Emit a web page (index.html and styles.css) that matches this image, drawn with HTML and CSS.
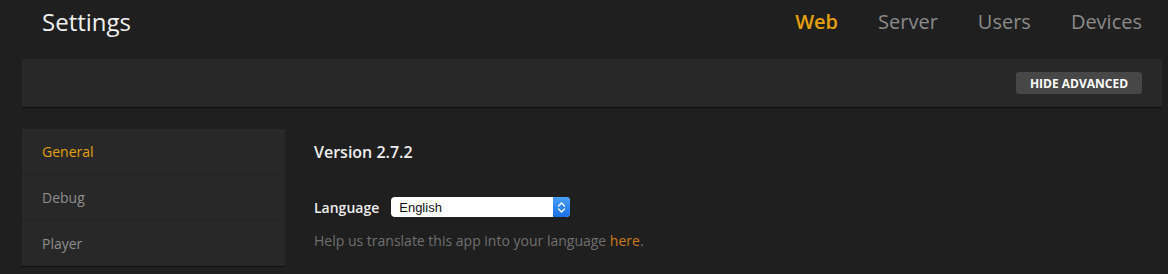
FILE: index.html
```html
<!DOCTYPE html>
<html>
<head>
<meta charset="utf-8">
<link rel="stylesheet" href="styles.css">
</head>
<body>
<div class="page">
  <header class="header">
    <h1 class="title">Settings</h1>
    <nav class="tabs">
      <a class="tab active">Web</a>
      <a class="tab">Server</a>
      <a class="tab">Users</a>
      <a class="tab">Devices</a>
    </nav>
  </header>
  <div class="toolbar">
    <button class="btn">HIDE ADVANCED</button>
  </div>
  <div class="main">
    <ul class="side">
      <li class="side-item active">General</li>
      <li class="side-item">Debug</li>
      <li class="side-item">Player</li>
    </ul>
    <section class="content">
      <h2 class="version">Version 2.7.2</h2>
      <div class="row">
        <label class="label">Language</label>
        <div class="select">
          <span class="select-value">English</span>
          <span class="stepper">
            <svg width="9" height="13" viewBox="0 0 9 13"><path d="M1.5 5 L4.5 2 L7.5 5 M1.5 8 L4.5 11 L7.5 8" fill="none" stroke="#fff" stroke-width="1.3" stroke-linecap="round" stroke-linejoin="round"/></svg>
          </span>
        </div>
      </div>
      <p class="help">Help us translate this app into your language <a class="link">here</a>.</p>
    </section>
  </div>
</div>
</body>
</html>
```

FILE: styles.css
```css
html, body {
  margin: 0;
  padding: 0;
  background: #1f1f1f;
  font-family: "Open Sans", "Noto Sans", sans-serif;
}
.page {
  margin: 0 6px 0 22px;
}
.header {
  height: 59px;
  display: flex;
  align-items: center;
  justify-content: space-between;
  padding: 0 20px;
}
.title {
  margin: 0;
  font-size: 24px;
  font-weight: 500;
  color: #f0f0f0;
  position: relative;
  top: -8px;
}
.tabs {
  display: flex;
  gap: 40px;
  position: relative;
  top: -8px;
}
.tab {
  font-size: 20px;
  color: #8a8a8a;
  font-weight: 400;
}
.tab.active {
  color: #e5a00d;
  font-weight: 600;
}
.toolbar {
  height: 48px;
  background: #282828;
  border-bottom: 1px solid #111;
  display: flex;
  align-items: center;
  justify-content: flex-end;
  padding: 0 20px;
}
.btn {
  height: 22px;
  width: 126px;
  border: 0;
  border-radius: 3px;
  background: #474747;
  color: #fff;
  font-family: "Open Sans", sans-serif;
  font-weight: 700;
  font-size: 12px;
  padding: 0;
}
.main {
  display: flex;
  margin-top: 21px;
}
.side {
  list-style: none;
  margin: 0;
  padding: 0;
  width: 263px;
  background: #282828;
  border-bottom: 1px solid #111;
}
.side-item {
  height: 45px;
  line-height: 45px;
  padding-left: 20px;
  font-size: 14px;
  color: #8f8f8f;
  border-bottom: 1px solid #222;
}
.side-item:last-child {
  border-bottom: 0;
}
.side-item.active {
  color: #e5a00d;
}
.content {
  padding-left: 29px;
  padding-top: 12px;
}
.version {
  margin: 0;
  font-size: 16px;
  font-weight: 600;
  color: #eeeeee;
}
.row {
  display: flex;
  align-items: center;
  margin-top: 34px;
}
.label {
  font-size: 14px;
  font-weight: 600;
  color: #eeeeee;
  margin-right: 12px;
}
.select {
  width: 179px;
  height: 20px;
  background: #fff;
  border-radius: 4px;
  display: flex;
  align-items: center;
  justify-content: space-between;
  overflow: hidden;
}
.select-value {
  font-family: "Liberation Sans", Arial, sans-serif;
  font-size: 13px;
  color: #111;
  padding-left: 8px;
}
.stepper {
  width: 17px;
  height: 20px;
  background: linear-gradient(#4aa0ff, #1a6fe8);
  display: flex;
  align-items: center;
  justify-content: center;
}
.help {
  margin: 14px 0 0;
  font-size: 14px;
  color: #6f6f6f;
}
.link {
  color: #cc7b19;
}
```
